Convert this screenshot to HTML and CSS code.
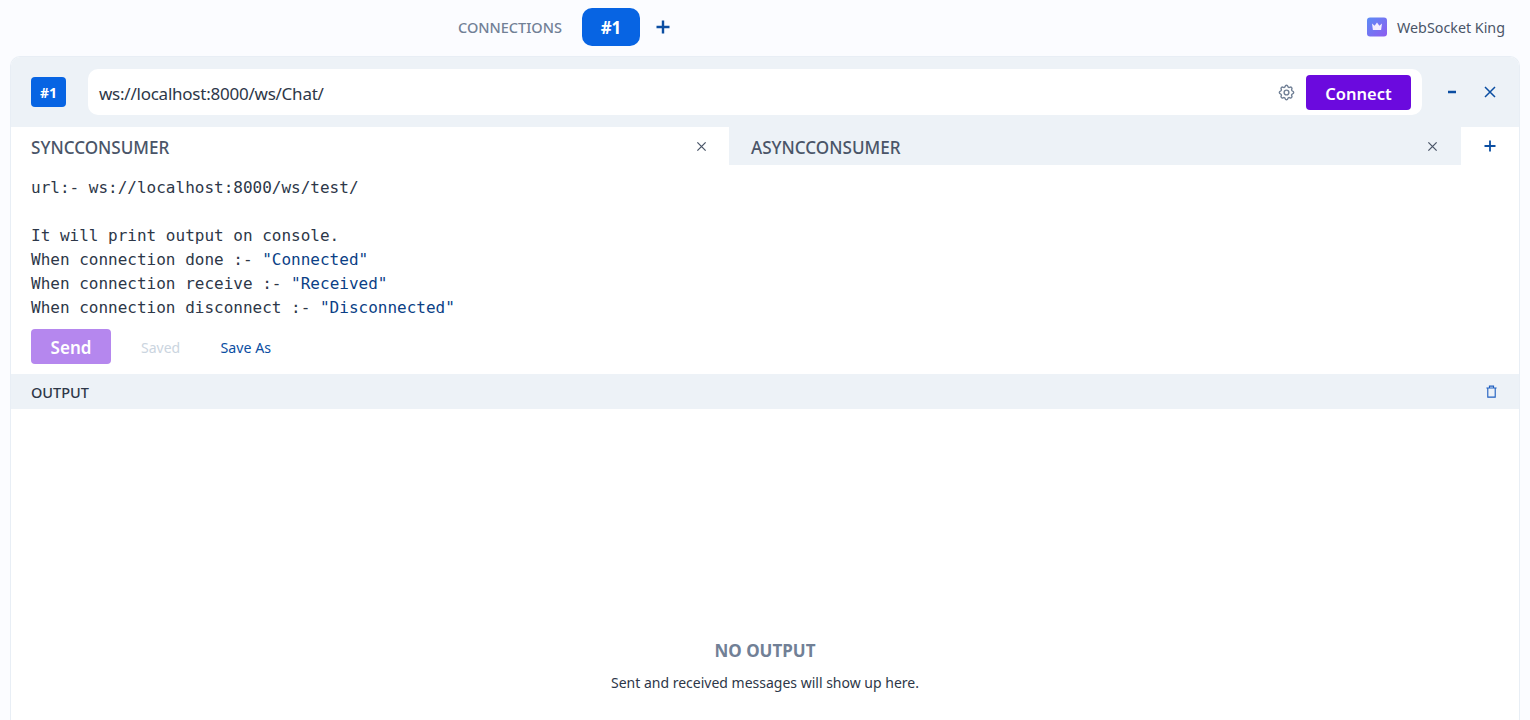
FILE: index.html
```html
<!DOCTYPE html>
<html lang="en">
<head>
<meta charset="utf-8">
<title>WebSocket King</title>
<link rel="stylesheet" href="styles.css">
</head>
<body>
<nav class="topbar">
  <div class="conn-nav">
    <span class="conn-label">CONNECTIONS</span>
    <button class="conn-pill">#1</button>
    <svg class="icon-plus" width="16" height="16" viewBox="0 0 16 16"><path d="M8 1.500v13M1.500 8h13"/></svg>
  </div>
  <div class="brand">
    <svg class="brand-logo" width="20" height="20" viewBox="0 0 20 20">
      <defs><linearGradient id="lg" x1="0" y1="0" x2="1" y2="1"><stop offset="0" stop-color="#5a8cf5"/><stop offset="1" stop-color="#8f5cf0"/></linearGradient></defs>
      <rect width="20" height="19" y="0.500" rx="3" fill="url(#lg)"/>
      <path d="M5 6.500l2.600 2.200L10 5.600l2.400 3.100L15 6.500l-.9 6.500H5.900z" fill="#f3eefe"/>
    </svg>
    <span>WebSocket King</span>
  </div>
</nav>
<main class="panel">
  <header class="panel-head">
    <span class="badge">#1</span>
    <div class="url-box">
      <span class="url-text">ws://localhost:8000/ws/Chat/</span>
      <svg class="icon-gear" width="19" height="19" viewBox="0 0 24 24"><path d="M10.300 4.300c.4-1.800 3-1.800 3.400 0a1.700 1.700 0 0 0 2.600 1.100c1.500-.9 3.300.8 2.400 2.400a1.700 1.700 0 0 0 1 2.500c1.800.4 1.800 3 0 3.400a1.700 1.700 0 0 0-1 2.600c.9 1.500-.9 3.300-2.400 2.400a1.700 1.700 0 0 0-2.600 1c-.4 1.800-3 1.800-3.400 0a1.700 1.700 0 0 0-2.600-1c-1.500.9-3.300-.9-2.400-2.400a1.700 1.700 0 0 0-1-2.600c-1.800-.4-1.800-3 0-3.400a1.700 1.700 0 0 0 1-2.500c-.9-1.600.9-3.300 2.400-2.400a1.700 1.700 0 0 0 2.600-1.100z"/><circle cx="12" cy="12" r="3"/></svg>
      <button class="connect-btn">Connect</button>
    </div>
    <svg class="icon-act minus" width="14" height="14" viewBox="0 0 14 14"><path d="M3 7h8"/></svg>
    <svg class="icon-act close" width="14" height="14" viewBox="0 0 14 14"><path d="M2 2l10 10M12 2L2 12"/></svg>
  </header>
  <div class="tabs">
    <div class="tab tab-on"><span class="tab-name">SYNCCONSUMER</span><svg class="icon-x" width="12" height="12" viewBox="0 0 12 12"><path d="M1.500 1.500l9 9M10.500 1.500l-9 9"/></svg></div>
    <div class="tab tab-off"><span class="tab-name">ASYNCCONSUMER</span><svg class="icon-x" width="12" height="12" viewBox="0 0 12 12"><path d="M1.500 1.500l9 9M10.500 1.500l-9 9"/></svg></div>
    <div class="tab-add"><svg class="icon-plus-sm" width="12" height="12" viewBox="0 0 12 12"><path d="M6 .5v11M.5 6h11"/></svg></div>
  </div>
  <pre class="editor">url:- ws://localhost:8000/ws/test/

It will print output on console.
When connection done :- <span class="str">"Connected"</span>
When connection receive :- <span class="str">"Received"</span>
When connection disconnect :- <span class="str">"Disconnected"</span></pre>
  <div class="actions">
    <button class="send-btn">Send</button>
    <span class="saved">Saved</span>
    <span class="save-as">Save As</span>
  </div>
  <div class="output-head">
    <span class="output-title">OUTPUT</span>
    <svg class="icon-trash" width="14" height="14" viewBox="0 0 14 14"><path d="M1.500 3.200h11M3 3.200V13h8V3.200M4.800 3.200V1.200h4.400v2"/></svg>
  </div>
  <section class="output-body">
    <h2>NO OUTPUT</h2>
    <p>Sent and received messages will show up here.</p>
  </section>
</main>
</body>
</html>
```
FILE: styles.css
```css
* { box-sizing: border-box; }
html, body { height: 100%; }
body {
  margin: 0;
  height: 720px;
  overflow: hidden;
  background: #fbfcff;
  font-family: "Noto Sans", "Open Sans", sans-serif;
  display: flex;
  flex-direction: column;
  color: #2d3748;
}
button { font-family: inherit; border: 0; cursor: pointer; }
.topbar {
  height: 56px;
  flex: none;
  display: flex;
  align-items: center;
  padding: 0 25px 3px 458px;
  justify-content: space-between;
}
.conn-nav { display: flex; align-items: center; }
.conn-label { font-size: 14.5px; font-weight: 500; color: #718096; width: 124px; padding-top: 1px; }
.conn-pill {
  width: 58px; height: 38px;
  background: #0764e3;
  color: #fff;
  border-radius: 10px;
  font-size: 17px;
  font-weight: 700;
  padding: 1px 0 0;
}
.icon-plus { margin-left: 15px; fill: none; stroke: #0b4ea2; stroke-width: 2.400; }
.brand { display: flex; align-items: center; gap: 10px; font-size: 14.3px; color: #4a5568; padding-top: 1px; }
.panel {
  flex: 1;
  margin: 0 10px;
  min-height: 0;
  background: #fff;
  border: 1px solid #e8eef5;
  border-bottom: 0;
  border-radius: 10px 10px 0 0;
  display: flex;
  flex-direction: column;
}
.panel-head {
  height: 70px;
  flex: none;
  background: #edf2f7;
  border-radius: 9px 9px 0 0;
  display: flex;
  align-items: center;
  padding: 0 20px 0 20px;
}
.badge {
  width: 35px; height: 30px;
  background: #0764e3;
  color: #fff;
  border-radius: 4px;
  font-size: 14px;
  font-weight: 700;
  display: flex; align-items: center; justify-content: center;
  margin-right: 22px;
}
.url-box {
  width: 1334px;
  height: 46px;
  background: #fff;
  border-radius: 10px;
  display: flex;
  align-items: center;
  padding: 0 11px;
  margin-right: 23px;
}
.url-text { flex: 1; font-size: 17px; letter-spacing: -0.24px; color: #2d3748; padding-top: 2px; }
.icon-gear { fill: none; stroke: #718096; stroke-width: 1.800; margin-right: 10px; }
.connect-btn {
  width: 105px; height: 35px;
  background: #6b0ade;
  color: #fff;
  border-radius: 4px;
  font-size: 16.5px;
  font-weight: 600;
  padding: 2px 0 0;
}
.icon-act { fill: none; stroke: #0b4ea2; stroke-width: 2; flex: none; }
.icon-act.minus { margin-right: 24px; stroke-width: 2.500; }
.icon-act.close { stroke-width: 1.500; }
.tabs { display: flex; height: 38px; flex: none; }
.tab {
  display: flex;
  align-items: center;
  justify-content: space-between;
  padding: 0 22px 0 20px;
  font-size: 17.100px;
  font-weight: 500;
  color: #4a5568;
}
.tab-name { padding-top: 2px; }
.tab-on { width: 718px; background: #fff; }
.tab-off { width: 732px; background: #edf2f7; padding: 0 23px 0 22px; }
.tab-add { flex: 1; display: flex; align-items: center; justify-content: center; }
.icon-x { fill: none; stroke: #4a5568; stroke-width: 1.400; width: 11px; height: 11px; }
.icon-plus-sm { fill: none; stroke: #0b4ea2; stroke-width: 1.800; }
.editor {
  margin: 0;
  padding: 11px 20px 0;
  height: 164px;
  flex: none;
  font-family: "DejaVu Sans Mono", monospace;
  font-size: 16px;
  line-height: 24px;
  color: #2d3748;
}
.str { color: #0b3f86; }
.actions { display: flex; align-items: center; padding-left: 20px; height: 35px; flex: none; font-size: 14px; }
.send-btn {
  width: 80px; height: 35px;
  background: #b587ee;
  color: #fff;
  border-radius: 4px;
  font-size: 17px;
  font-weight: 600;
  padding: 2px 0 0;
}
.saved { color: #cbd5e0; margin-left: 30px; width: 79.500px; padding-top: 2px; }
.save-as { color: #0b4ea2; padding-top: 2px; font-size: 14.200px; }
.output-head {
  margin-top: 10px;
  height: 35px;
  flex: none;
  background: #edf2f7;
  display: flex;
  align-items: center;
  justify-content: space-between;
  padding: 0 21px 0 20px;
  font-size: 14.500px;
  font-weight: 500;
  color: #2d3748;
}
.output-title { padding-top: 1px; }
.icon-trash { fill: none; stroke: #1f5fc0; stroke-width: 1.200; width: 13px; height: 13px; }
.output-body {
  flex: 1;
  display: flex;
  flex-direction: column;
  align-items: center;
  justify-content: flex-end;
  padding-bottom: 27px;
}
.output-body h2 { margin: 0 0 10px; font-size: 17px; line-height: 24px; font-weight: 700; color: #718096; }
.output-body p { margin: 0; font-size: 14px; line-height: 20px; color: #2d3748; }
```
